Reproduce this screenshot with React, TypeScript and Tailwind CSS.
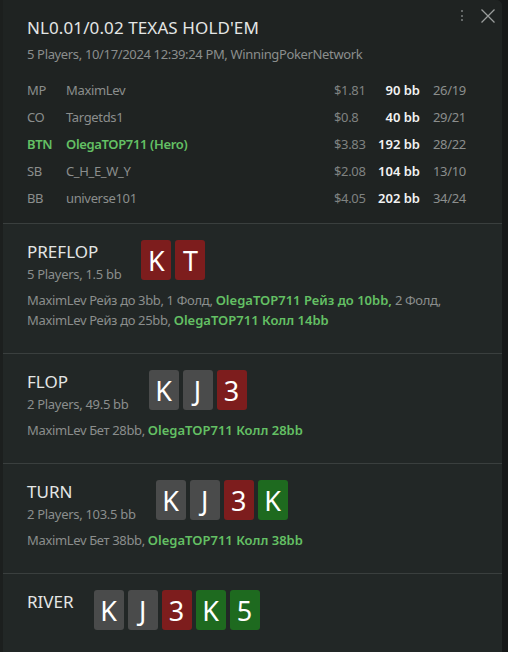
type Card = { r: string; c: "gray" | "red" | "green" };

const cardBg = {
  gray: "bg-[#4a4b4b]",
  red: "bg-[#7d1d1d]",
  green: "bg-[#1e6a1f]",
};

const players = [
  { pos: "MP", name: "MaximLev", money: "$1.81", bb: "90 bb", ratio: "26/19" },
  { pos: "CO", name: "Targetds1", money: "$0.8", bb: "40 bb", ratio: "29/21" },
  { pos: "BTN", name: "OlegaTOP711 (Hero)", money: "$3.83", bb: "192 bb", ratio: "28/22", hero: true },
  { pos: "SB", name: "C_H_E_W_Y", money: "$2.08", bb: "104 bb", ratio: "13/10" },
  { pos: "BB", name: "universe101", money: "$4.05", bb: "202 bb", ratio: "34/24" },
];

function Cards({ cards }: { cards: Card[] }) {
  return (
    <div className="flex gap-1">
      {cards.map((card, i) => (
        <div
          key={i}
          className={`w-[30px] h-[40px] rounded-[3px] flex items-center justify-center text-white text-[27px] leading-none ${cardBg[card.c]}`}
        >
          {card.r}
        </div>
      ))}
    </div>
  );
}

function Street({
  title,
  sub,
  cards,
  children,
  last,
}: {
  title: string;
  sub?: string;
  cards: Card[];
  children?: React.ReactNode;
  last?: boolean;
}) {
  return (
    <section className={`px-6 pt-4 ${last ? "" : "pb-[23px] border-b border-[#3a3f3e]"}`}>
      <div className="flex items-start gap-5">
        <div>
          <div className="text-[17px] leading-[23px] text-[#e4e6e5]">{title}</div>
          {sub && (
            <div className="text-[13px] leading-[22px] tracking-[-0.3px] text-[#8b8e8d]">{sub}</div>
          )}
        </div>
        <Cards cards={cards} />
      </div>
      {children && (
        <div className="mt-[5px] text-[13px] leading-5 tracking-[-0.35px] text-[#8b8e8d]">
          {children}
        </div>
      )}
    </section>
  );
}

const G = ({ children }: { children: React.ReactNode }) => (
  <span className="font-semibold tracking-normal text-[#64c064]">{children}</span>
);

export default function App() {
  return (
    <div className="h-[652px] w-[508px] flex bg-[#171919] overflow-hidden font-['Noto_Sans',sans-serif]">
      <div className="w-[3px] bg-[#1c1f1e]" />
      <div className="w-[499px] h-full bg-[#222726] rounded-tr-[6px] flex flex-col">
        {/* Header */}
        <header className="relative px-6 pt-4 pb-[11px] border-b border-[#3a3f3e] bg-[#1f2322] rounded-tr-[6px]">
          <div className="absolute right-[7px] top-[9px] flex items-start gap-[18px]">
            <div className="flex flex-col gap-[2.5px] pt-[1px]">
              <span className="w-[2px] h-[2px] bg-[#7d8180] rounded-full" />
              <span className="w-[2px] h-[2px] bg-[#7d8180] rounded-full" />
              <span className="w-[2px] h-[2px] bg-[#7d8180] rounded-full" />
            </div>
            <svg width="14" height="14" viewBox="0 0 14 14" stroke="#9a9d9c" strokeWidth="1.3">
              <path d="M0.5 0.5L13.5 13.5M13.5 0.5L0.5 13.5" />
            </svg>
          </div>
          <h1 className="text-[17px] leading-[23px] text-[#e4e6e5] tracking-[0.1px]">
            NL0.01/0.02 TEXAS HOLD'EM
          </h1>
          <div className="mt-[5px] text-[13px] leading-5 tracking-[-0.35px] text-[#8b8e8d]">
            5 Players, 10/17/2024 12:39:24 PM, WinningPokerNetwork
          </div>
          <div className="mt-[13px] text-[13px] tracking-[-0.35px]">
            {players.map((p) => (
              <div key={p.pos} className="flex items-center h-[27px]">
                <span className={`w-[39px] ${p.hero ? "font-semibold text-[#64c064]" : "text-[#8b8e8d]"}`}>
                  {p.pos}
                </span>
                <span className={`flex-1 ${p.hero ? "font-semibold text-[#64c064]" : "text-[#8b8e8d]"}`}>
                  {p.name}
                </span>
                <span className="w-[42px] text-[#7f8281]">{p.money}</span>
                <span className="w-[44px] text-right font-semibold tracking-normal text-[#f2f2f2]">{p.bb}</span>
                <span className="ml-[13px] w-[45px] text-[#8b8e8d]">{p.ratio}</span>
              </div>
            ))}
          </div>
        </header>

        <Street
          title="PREFLOP"
          sub="5 Players, 1.5 bb"
          cards={[
            { r: "K", c: "red" },
            { r: "T", c: "red" },
          ]}
        >
          MaximLev Рейз до 3bb, 1 Фолд, <G>OlegaTOP711 Рейз до 10bb,</G> 2 Фолд, MaximLev Рейз до
          25bb, <G>OlegaTOP711 Колл 14bb</G>
        </Street>

        <Street
          title="FLOP"
          sub="2 Players, 49.5 bb"
          cards={[
            { r: "K", c: "gray" },
            { r: "J", c: "gray" },
            { r: "3", c: "red" },
          ]}
        >
          MaximLev Бет 28bb, <G>OlegaTOP711 Колл 28bb</G>
        </Street>

        <Street
          title="TURN"
          sub="2 Players, 103.5 bb"
          cards={[
            { r: "K", c: "gray" },
            { r: "J", c: "gray" },
            { r: "3", c: "red" },
            { r: "K", c: "green" },
          ]}
        >
          MaximLev Бет 38bb, <G>OlegaTOP711 Колл 38bb</G>
        </Street>

        <Street
          title="RIVER"
          last
          cards={[
            { r: "K", c: "gray" },
            { r: "J", c: "gray" },
            { r: "3", c: "red" },
            { r: "K", c: "green" },
            { r: "5", c: "green" },
          ]}
        />
      </div>
      <div className="flex-1 bg-[#161818]" />
    </div>
  );
}
